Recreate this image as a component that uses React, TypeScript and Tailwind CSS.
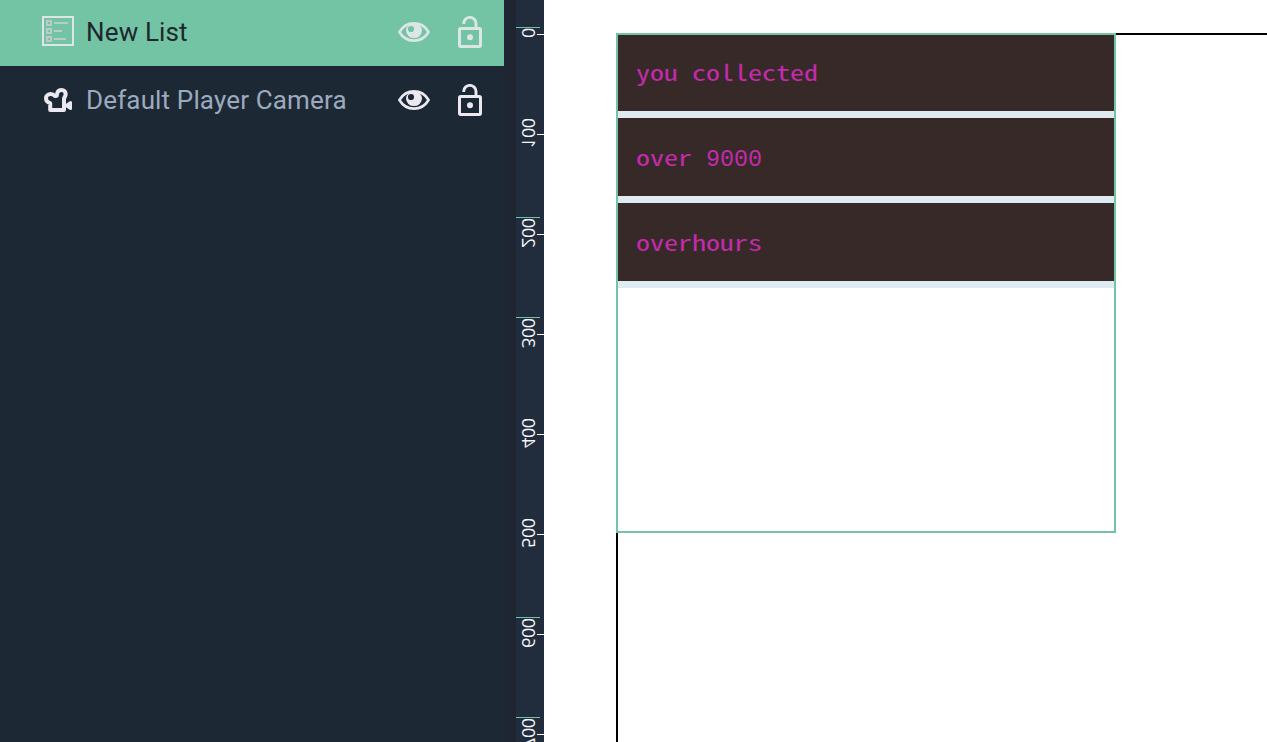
const EyeIcon = () => (
  <svg className="h-5 w-8 shrink-0" viewBox="0 0 32 20" fill="none">
    <path d="M1.4 10C4.6 4.6 9.8 1.4 16 1.4S27.400 4.600 30.600 10C27.400 15.400 22.200 18.600 16 18.600S4.600 15.400 1.400 10Z" stroke="currentColor" strokeWidth="2.6" strokeLinejoin="round" />
    <path fillRule="evenodd" fill="currentColor" d="M16 1.400a8 7.200 0 0 1 8 7.200a8 7.500 0 0 1-16 0a8 7.200 0 0 1 8-7.200ZM13 3.900a3.100 3.100 0 1 0 0 6.200a3.100 3.100 0 0 0 0-6.200Z" />
  </svg>
);

const UnlockIcon = () => (
  <svg className="h-8 w-6 shrink-0" viewBox="0 0 24 32" fill="none" stroke="currentColor">
    <rect x="1.500" y="12.500" width="21" height="18" rx="1.200" strokeWidth="3" />
    <path d="M5.700 8V7.300a6.150 5.900 0 0 1 12.300 0V12" strokeWidth="2.900" />
    <circle cx="12" cy="21.300" r="3" fill="currentColor" stroke="none" />
  </svg>
);

const ListIcon = () => (
  <svg className="h-[30px] w-8 shrink-0" viewBox="0 0 32 30" fill="none" stroke="currentColor" strokeWidth="2">
    <rect x="1" y="1" width="30" height="28" />
    <g className="text-[#bccbc8]">
      <rect x="5" y="5" width="4" height="4" />
      <rect x="5" y="13" width="4" height="4" />
      <rect x="5" y="21" width="4" height="4" />
      <path d="M12 7H26M12 15H20M12 23H24" />
    </g>
  </svg>
);

const CameraIcon = () => (
  <svg className="mx-0.5 h-[26px] w-7 shrink-0" viewBox="0 0 28 26" fill="none" stroke="currentColor">
    <path d="M6.200 23V16.200C3.500 15.400 2 13.500 2 11.200C2 8.800 4.100 7 6.700 7C8.600 7 9.900 7.800 10.900 9.100L12.800 8.700C12.900 5.200 14.600 3 17.400 3C20.200 3 21.700 4.800 21.700 7.200C21.700 8.900 20.200 10.300 20 12V23Z" strokeWidth="4" strokeLinejoin="round" />
    <path d="M21.500 17.200L25.300 14.400Q28 13 28 15.500V21.500Q28 24 25.300 22.600L21.500 20Z" fill="currentColor" stroke="none" />
  </svg>
);

const marks = [
  { value: 0, guide: true },
  { value: 100, guide: false },
  { value: 200, guide: true },
  { value: 300, guide: true },
  { value: 400, guide: false },
  { value: 500, guide: false },
  { value: 600, guide: true },
  { value: 700, guide: true },
];

const Ruler = () => (
  <div className="flex w-7 shrink-0 flex-col overflow-hidden bg-[#212d3c] pt-[17px]">
    {marks.map(({ value, guide }) => (
      <div key={value} className="relative h-[100px] shrink-0">
        {guide && (
          <div className={value === 0 ? "absolute left-0 top-[10px] h-px w-6 bg-[#6fc3a3]" : "absolute left-0 top-0 h-px w-6 bg-[#6fc3a3]"} />
        )}
        <div className="absolute right-0 top-[17px] h-px w-[7px] bg-white" />
        <div className={value === 0 ? "absolute left-[3px] top-[11px] h-[10px] w-5" : "absolute left-[3px] top-[1px] h-[30px] w-5"}>
          <span className="absolute left-0 top-full block origin-top-left [transform:rotate(-90deg)_scaleY(-1)_translateY(-100%)] font-['Open_Sans','Noto_Sans',sans-serif] text-[18px] font-medium leading-5 tracking-[-0.4px] text-[#f4f5f8]">
            {value}
          </span>
        </div>
      </div>
    ))}
  </div>
);

const items = [
  { words: "you collected", digits: "", style: "h-[83px] pb-[7px]" },
  { words: "over ", digits: "9000", style: "h-[85px] pb-[7px]" },
  { words: "overhours", digits: "", style: "h-[85px] pb-[7px]" },
];

export default function App() {
  return (
    <div className="flex h-[742px] w-full overflow-hidden bg-white font-['Roboto',sans-serif]">
      <aside className="w-[504px] shrink-0 bg-[#1d2835] text-[26px] tracking-[0.15px]">
        <div className="flex h-[66px] items-start bg-[#73c3a5] pl-[42px] pr-[22px] text-[#dce7e5]">
          <div className="pt-4"><ListIcon /></div>
          <span className="ml-3 mt-[13px] flex-1 whitespace-nowrap leading-[38px] text-[#20272d]">New List</span>
          <div className="pt-[22px]"><EyeIcon /></div>
          <div className="ml-7 pt-4"><UnlockIcon /></div>
        </div>
        <div className="flex h-[68px] items-start pl-[42px] pr-[22px] text-[#ece8f0]">
          <div className="pt-[21px]"><CameraIcon /></div>
          <span className="ml-3 mt-[15px] flex-1 whitespace-nowrap leading-[38px] text-[#9caabd]">Default Player Camera</span>
          <div className="pt-6"><EyeIcon /></div>
          <div className="ml-7 pt-[18px]"><UnlockIcon /></div>
        </div>
      </aside>
      <div className="w-3 shrink-0 bg-[#1f2631]" />
      <Ruler />
      <main className="flex flex-1 bg-white pl-[72px] pt-[33px]">
        <div className="flex-1 border-l-2 border-t-2 border-black">
          <div className="-ml-0.5 -mt-0.5 h-[500px] w-[500px] border-2 border-[#73c3a5] bg-white">
            {items.map(({ words, digits, style }, index) => (
              <div key={words} className={`bg-[#e0eaf2] ${style}`}>
                <div className={`flex h-full items-center whitespace-pre bg-[#372928] pl-[18px] leading-9 text-[#c42bac] ${index > 0 ? "pt-0.5" : ""}`}>
                  <div className="flex items-baseline">
                    <span className={digits ? "w-[70px]" : ""}>
                      <span className="inline-block origin-left scale-x-[1.273] font-['Noto_Sans_Mono_CJK_SC',monospace] text-[22px]">{words}</span>
                    </span>
                    {digits && <span className="font-['Liberation_Mono',monospace] text-[23.33px]">{digits}</span>}
                  </div>
                </div>
              </div>
            ))}
          </div>
        </div>
      </main>
    </div>
  );
}
